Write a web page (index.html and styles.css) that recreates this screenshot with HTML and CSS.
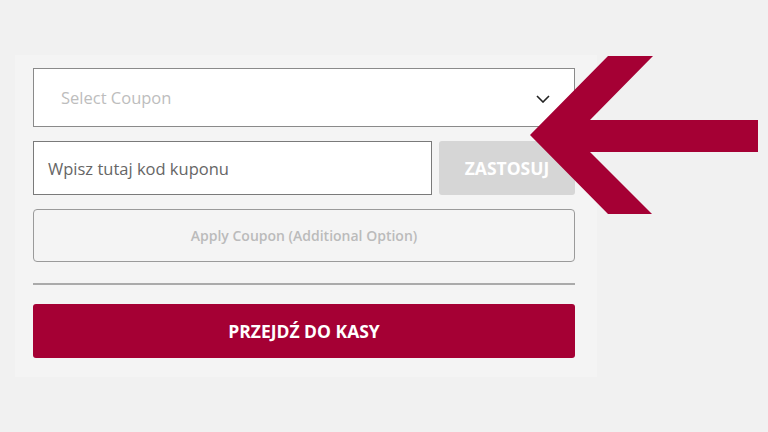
FILE: index.html
```html
<!DOCTYPE html>
<html lang="pl">
<head>
<meta charset="utf-8">
<title>Kupon</title>
<link rel="stylesheet" href="styles.css">
</head>
<body>
<div class="panel">
  <div class="select">
    <span class="select-text">Select Coupon</span>
    <svg class="chevron" width="14" height="8" viewBox="0 0 14 8"><path d="M1 1 L7 7 L13 1" fill="none" stroke="#222" stroke-width="1.6"/></svg>
  </div>
  <div class="row">
    <div class="input">Wpisz tutaj kod kuponu</div>
    <div class="apply">ZASTOSUJ</div>
  </div>
  <div class="extra">Apply Coupon (Additional Option)</div>
  <div class="divider"></div>
  <div class="checkout">PRZEJDŹ DO KASY</div>
</div>
<svg class="arrow" width="768" height="432" viewBox="0 0 768 432">
  <polygon points="530,135 608,56 653,56 590,120 758,120 758,152 590,152 652,214 608,214" fill="#a50034"/>
</svg>
</body>
</html>
```
FILE: styles.css
```css
html, body {
  margin: 0;
  padding: 0;
}
body {
  background: #f1f1f1;
  width: 768px;
  height: 432px;
  overflow: hidden;
  position: relative;
  font-family: "Open Sans", "Noto Sans", sans-serif;
}
.panel {
  margin: 55px 0 0 15px;
  width: 582px;
  height: 322px;
  box-sizing: border-box;
  background: #f4f4f4;
  padding: 13px 22px 0 18px;
  display: flex;
  flex-direction: column;
}
.select {
  height: 59px;
  box-sizing: border-box;
  border: 1.5px solid #8a8a8a;
  background: #fff;
  display: flex;
  align-items: center;
  justify-content: space-between;
  padding: 0 24px 0 27px;
}
.select-text {
  color: #bdbdbd;
  font-size: 16.5px;
}
.chevron {
  display: block;
  margin-top: 2px;
}
.row {
  margin-top: 14px;
  height: 54px;
  display: flex;
  gap: 7px;
}
.input {
  width: 399px;
  box-sizing: border-box;
  border: 1.5px solid #7a7a7a;
  background: #fff;
  display: flex;
  align-items: center;
  padding-left: 14px;
  color: #666;
  font-size: 16.5px;
}
.apply {
  flex: 1;
  background: #d6d6d6;
  border-radius: 3px;
  color: #fff;
  font-weight: 700;
  font-size: 17.5px;
  display: flex;
  align-items: center;
  justify-content: center;
}
.extra {
  margin-top: 14px;
  height: 53px;
  box-sizing: border-box;
  border: 1.5px solid #9a9a9a;
  border-radius: 4px;
  display: flex;
  align-items: center;
  justify-content: center;
  color: #bbb;
  font-size: 14px;
  font-weight: 600;
}
.divider {
  margin-top: 21px;
  height: 1.5px;
  background: #aaa;
}
.checkout {
  margin-top: 19px;
  height: 54px;
  background: #a50034;
  border-radius: 3px;
  color: #fff;
  font-weight: 700;
  font-size: 17.5px;
  display: flex;
  align-items: center;
  justify-content: center;
}
.arrow {
  position: absolute;
  left: 0;
  top: 0;
}
```
